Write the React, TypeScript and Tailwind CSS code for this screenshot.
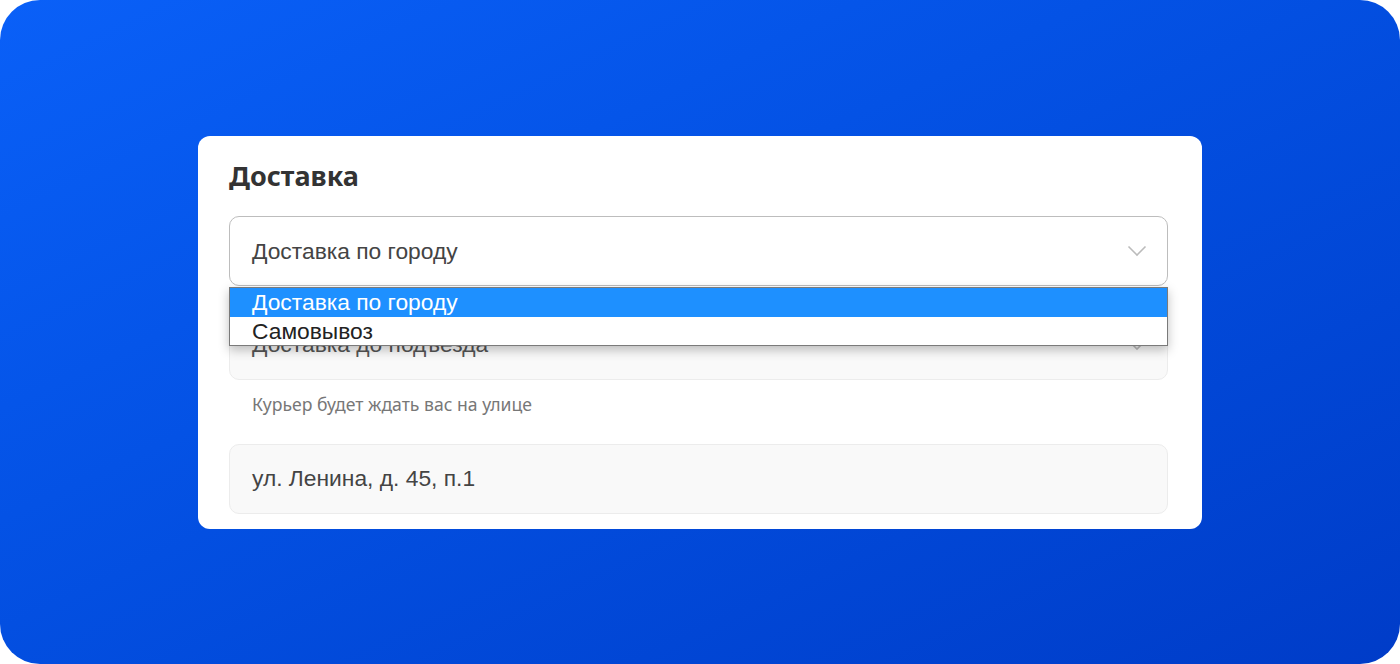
import React from 'react';

const Chevron: React.FC<{ className?: string }> = ({ className }) => (
    <svg width="20" height="12" viewBox="0 0 20 12" fill="none" className={className}>
        <path d="M1.5 1.5 L10 10 L18.5 1.5" stroke="currentColor" strokeWidth="1.6" />
    </svg>
);

const options = ['Доставка по городу', 'Самовывоз'];

export default function App() {
    return (
        <div className="w-[1400px] h-[664px] bg-white">
            <div className="w-full h-full rounded-[40px] bg-gradient-to-br from-[#0a60f8] to-[#003cc8] flex items-center justify-center">
                {/* Card */}
                <div className="w-[1004px] h-[393px] bg-white rounded-[12px] pt-[24px] pl-[31px] pr-[34px] font-['Noto_Sans',sans-serif]">
                    <h2 className="text-[27px] leading-[32px] font-bold text-[#333] mb-[24px]">Доставка</h2>

                    <div className="relative">
                        {/* Delivery type select */}
                        <div className="h-[70px] rounded-[10px] border border-[#bdbdbd] bg-white flex items-center justify-between pl-[22px] pr-[20px] font-['Liberation_Sans',Arial,sans-serif] text-[22.8px] text-[#444]">
                            <span className="mt-[2px]">Доставка по городу</span>
                            <Chevron className="text-[#bbbbbb]" />
                        </div>

                        {/* Open native options list */}
                        <div className="absolute left-0 top-[71px] w-[939px] z-10 bg-white border border-[#7a7a7a] shadow-[0_4px_10px_rgba(0,0,0,0.25)] font-['Liberation_Sans',Arial,sans-serif] text-[22.8px] leading-[28px]">
                            {options.map((o, i) => (
                                <div
                                    key={o}
                                    className={i === 0 ? 'h-[29px] pl-[22px] bg-[#1e90ff] text-white' : 'h-[28px] pl-[22px] text-[#222]'}
                                >
                                    {o}
                                </div>
                            ))}
                        </div>

                        {/* Courier option select */}
                        <div className="mt-[24px] h-[70px] rounded-[10px] border border-[#ececec] bg-[#f9f9f9] flex items-center justify-between pl-[22px] pr-[20px] font-['Liberation_Sans',Arial,sans-serif] text-[22.8px] text-[#555]">
                            <span>Доставка до подъезда</span>
                            <Chevron className="text-[#bbbbbb]" />
                        </div>
                    </div>

                    <p className="mt-[13px] pl-[23px] text-[17.6px] leading-[22px] text-[#777]">Курьер будет ждать вас на улице</p>

                    <div className="mt-[29px] h-[70px] rounded-[10px] border border-[#ececec] bg-[#f9f9f9] flex items-center pl-[22px] font-['Liberation_Sans',Arial,sans-serif] text-[22.8px] text-[#444]">
                        ул. Ленина, д. 45, п.1
                    </div>
                </div>
            </div>
        </div>
    );
}
